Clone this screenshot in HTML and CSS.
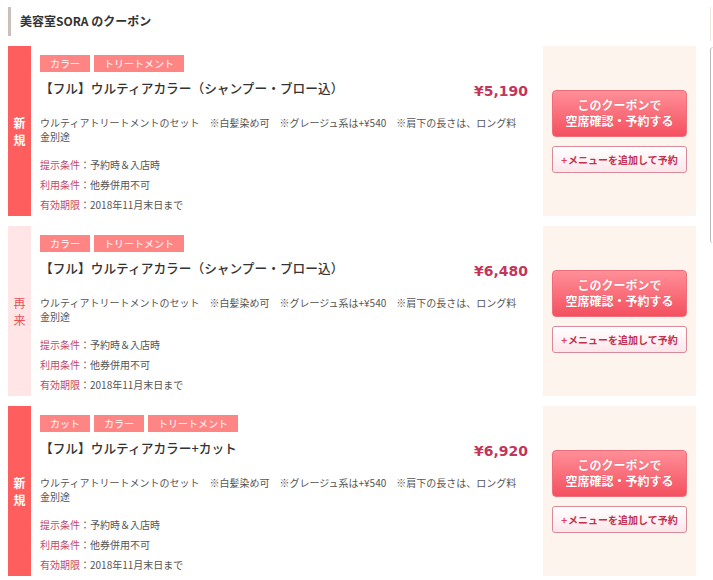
FILE: index.html
```html
<!DOCTYPE html>
<html lang="ja">
<head>
<meta charset="utf-8">
<title>美容室SORA のクーポン</title>
<link rel="stylesheet" href="styles.css">
</head>
<body>
<div class="page">
  <main class="main">
    <h2 class="heading">美容室SORA のクーポン</h2>

    <section class="coupon">
      <div class="band band-new"><span>新<br>規</span></div>
      <div class="content">
        <div class="tags"><span class="tag">カラー</span><span class="tag">トリートメント</span></div>
        <div class="title-row">
          <h3 class="title">【フル】ウルティアカラー（シャンプー・ブロー込）</h3>
          <span class="price">¥5,190</span>
        </div>
        <p class="desc">ウルティアトリートメントのセット　※白髪染め可　※グレージュ系は+¥540　※肩下の長さは、ロング料<br>金別途</p>
        <dl class="conds">
          <div class="cond"><dt>提示条件</dt><dd>：予約時＆入店時</dd></div>
          <div class="cond"><dt>利用条件</dt><dd>：他券併用不可</dd></div>
          <div class="cond"><dt>有効期限</dt><dd>：2018年11月末日まで</dd></div>
        </dl>
      </div>
      <div class="panel">
        <a class="btn-main">このクーポンで<br>空席確認・予約する</a>
        <a class="btn-sub"><span class="plus">+</span>メニューを追加して予約</a>
      </div>
    </section>

    <section class="coupon">
      <div class="band band-repeat"><span>再<br>来</span></div>
      <div class="content">
        <div class="tags"><span class="tag">カラー</span><span class="tag">トリートメント</span></div>
        <div class="title-row">
          <h3 class="title">【フル】ウルティアカラー（シャンプー・ブロー込）</h3>
          <span class="price">¥6,480</span>
        </div>
        <p class="desc">ウルティアトリートメントのセット　※白髪染め可　※グレージュ系は+¥540　※肩下の長さは、ロング料<br>金別途</p>
        <dl class="conds">
          <div class="cond"><dt>提示条件</dt><dd>：予約時＆入店時</dd></div>
          <div class="cond"><dt>利用条件</dt><dd>：他券併用不可</dd></div>
          <div class="cond"><dt>有効期限</dt><dd>：2018年11月末日まで</dd></div>
        </dl>
      </div>
      <div class="panel">
        <a class="btn-main">このクーポンで<br>空席確認・予約する</a>
        <a class="btn-sub"><span class="plus">+</span>メニューを追加して予約</a>
      </div>
    </section>

    <section class="coupon">
      <div class="band band-new"><span>新<br>規</span></div>
      <div class="content">
        <div class="tags"><span class="tag">カット</span><span class="tag">カラー</span><span class="tag">トリートメント</span></div>
        <div class="title-row">
          <h3 class="title">【フル】ウルティアカラー+カット</h3>
          <span class="price">¥6,920</span>
        </div>
        <p class="desc">ウルティアトリートメントのセット　※白髪染め可　※グレージュ系は+¥540　※肩下の長さは、ロング料<br>金別途</p>
        <dl class="conds">
          <div class="cond"><dt>提示条件</dt><dd>：予約時＆入店時</dd></div>
          <div class="cond"><dt>利用条件</dt><dd>：他券併用不可</dd></div>
          <div class="cond"><dt>有効期限</dt><dd>：2018年11月末日まで</dd></div>
        </dl>
      </div>
      <div class="panel">
        <a class="btn-main">このクーポンで<br>空席確認・予約する</a>
        <a class="btn-sub"><span class="plus">+</span>メニューを追加して予約</a>
      </div>
    </section>
  </main>
  <aside class="side">
    <div class="side-top"></div>
    <div class="side-box"></div>
  </aside>
</div>
</body>
</html>
```

FILE: styles.css
```css
* { box-sizing: border-box; }
html, body { margin: 0; padding: 0; background: #fff; }
body {
  font-family: "Noto Sans CJK JP", "Noto Sans", sans-serif;
  color: #333;
  overflow: hidden;
}
.page {
  display: flex;
  padding: 7px 0 0 8px;
  width: 713px;
}
.main { width: 688px; flex: none; }
.side { margin-left: 14px; width: 3px; flex: none; }
.side-top { height: 34px; border-left: 1px solid #eee6da; }
.side-box {
  margin-top: 6px;
  height: 196px;
  border-left: 1px solid #b9b9b9;
  border-top: 1px solid #ddd;
  border-radius: 3px 0 0 3px;
}

.heading {
  margin: 0 0 10px;
  height: 29px;
  line-height: 27px;
  padding-left: 9px;
  border-left: 3px solid #c9bfbb;
  font-size: 12px;
  font-weight: bold;
  color: #333;
}

.coupon {
  display: flex;
  height: 170px;
  margin-bottom: 10px;
}
.band {
  width: 23px;
  flex: none;
  display: flex;
  align-items: center;
  justify-content: center;
  font-size: 12px;
  font-weight: bold;
  line-height: 17px;
  text-align: center;
}
.band-new { background: #ff5e5e; color: #fff; }
.band-repeat { background: #ffe5e5; color: #ee4f57; font-weight: normal; }

.content {
  width: 499px;
  flex: none;
  padding: 9px 2px 0 9px;
}
.tags { display: flex; gap: 4px; }
.tag {
  height: 17px;
  line-height: 17px;
  padding: 0 10px;
  background: #ff8585;
  color: #fff;
  font-size: 10px;
}
.title-row {
  display: flex;
  justify-content: space-between;
  align-items: flex-start;
  margin-top: 6px;
}
.title {
  margin: 0;
  font-size: 12.7px;
  line-height: 20px;
  font-weight: 500;
  color: #333;
}
.price {
  font-family: "DejaVu Sans", Verdana, sans-serif;
  font-weight: bold;
  font-size: 14px;
  line-height: 20px;
  margin-top: 3px;
  color: #c2365c;
}
.desc {
  margin: 15px 0 0;
  font-size: 10px;
  line-height: 14px;
  color: #555;
}
.conds { margin: 11px 0 0; font-size: 10px; line-height: 20px; }
.cond { display: flex; }
.cond dt { color: #c24a68; }
.cond dd { margin: 0; color: #555; }

.panel {
  width: 153px;
  flex: none;
  margin-left: 13px;
  background: #fdf4ee;
  display: flex;
  flex-direction: column;
  justify-content: center;
  padding: 0 9px;
  gap: 9px;
}
.btn-main {
  display: flex;
  align-items: center;
  justify-content: center;
  height: 47px;
  border: 1px solid #ee6f7c;
  border-radius: 4px;
  background: linear-gradient(#ff8f98, #f4505f);
  color: #fff;
  font-size: 12px;
  font-weight: bold;
  line-height: 16px;
  text-align: center;
  text-shadow: 0 0 1px rgba(180,30,50,0.4);
}
.btn-sub {
  display: flex;
  align-items: center;
  justify-content: center;
  height: 27px;
  border: 1px solid #d98a98;
  border-radius: 3px;
  background: linear-gradient(#ffffff, #fbe6ea);
  color: #c3304c;
  font-size: 10px;
  font-weight: bold;
}
.plus { color: #e0404f; margin-right: 1px; }
```
